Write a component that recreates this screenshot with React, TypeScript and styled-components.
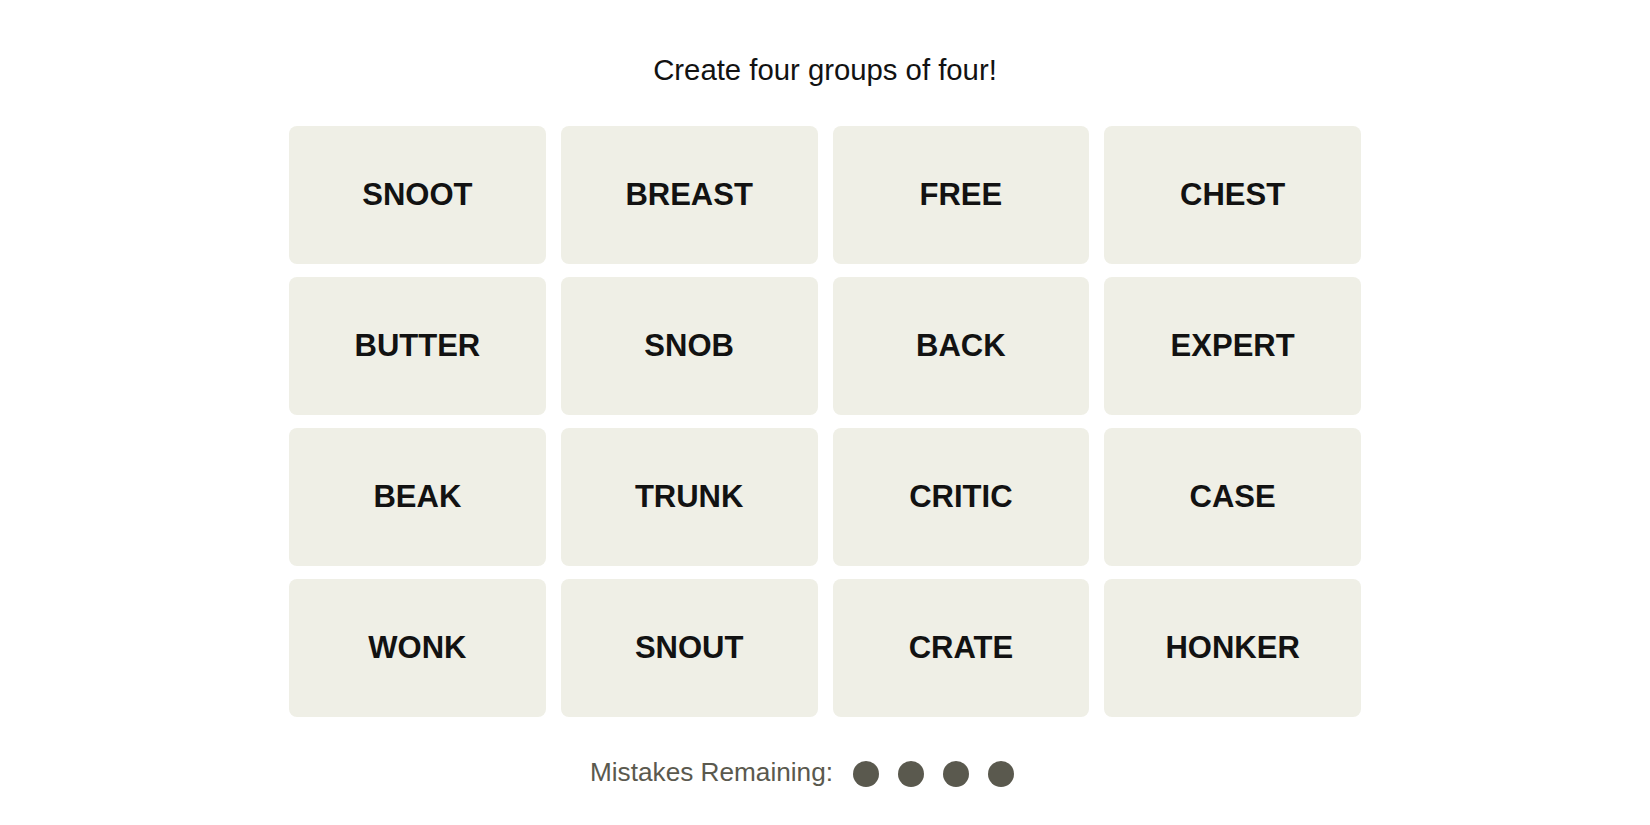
import styled, { createGlobalStyle } from "styled-components";

const GlobalStyle = createGlobalStyle`
body {
  margin: 0;
  background: #ffffff;
  font-family: "Liberation Sans", Arial, sans-serif;
}
`

const Page = styled.div`
display: flex;
flex-direction: column;
align-items: center;
padding-top: 52px;
`

const Title = styled.h1`
margin: 0;
font-size: 29.3px;
line-height: 36px;
font-weight: 400;
color: #121212;
`

const Board = styled.div`
margin-top: 38px;
width: 1072px;
display: grid;
grid-template-columns: repeat(4, 1fr);
grid-auto-rows: 138px;
column-gap: 15px;
row-gap: 13px;
`

const Tile = styled.button`
border: none;
border-radius: 8px;
background-color: #efefe6;
color: #121212;
font-family: "Liberation Sans", Arial, sans-serif;
font-size: 31px;
font-weight: 700;
text-transform: uppercase;
display: flex;
align-items: center;
justify-content: center;
cursor: pointer;
padding: 0;
`

const Mistakes = styled.div`
margin-top: 40px;
display: flex;
align-items: center;
gap: 20px;
padding-right: 46px;
`

const Label = styled.span`
font-size: 26.2px;
line-height: 30px;
color: #5a594e;
`

const Dots = styled.div`
display: flex;
gap: 19px;
padding-top: 4px;
`

const Dot = styled.span`
width: 26px;
height: 26px;
border-radius: 50%;
background-color: #5a594e;
`

const words = [
  "Snoot", "Breast", "Free", "Chest",
  "Butter", "Snob", "Back", "Expert",
  "Beak", "Trunk", "Critic", "Case",
  "Wonk", "Snout", "Crate", "Honker",
];

const App = () => {
  return (
    <>
      <GlobalStyle />
      <Page>
        <Title>Create four groups of four!</Title>
        <Board>
          {words.map((word) => <Tile key={word}>{word}</Tile>)}
        </Board>
        <Mistakes>
          <Label>Mistakes Remaining:</Label>
          <Dots>
            {[0, 1, 2, 3].map((i) => <Dot key={i} />)}
          </Dots>
        </Mistakes>
      </Page>
    </>
  );
};

export default App;
